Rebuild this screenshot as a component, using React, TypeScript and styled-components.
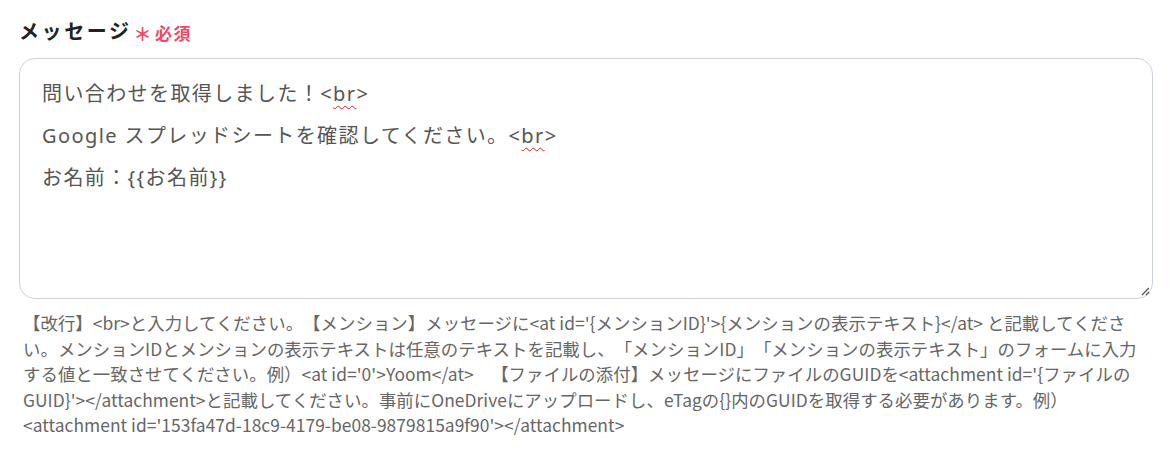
import React from "react";
import styled, { createGlobalStyle } from "styled-components";

const GlobalStyle = createGlobalStyle`
  html, body {
    margin: 0;
    padding: 0;
    background: #ffffff;
  }
  body {
    font-family: "Noto Sans", "Noto Sans CJK JP", sans-serif;
    text-spacing-trim: space-all;
  }
`;

const Page = styled.div`
  width: 1174px;
  height: 460px;
  box-sizing: border-box;
  padding: 14px 21px 0 19px;
  background: #fff;
`;

const LabelRow = styled.div`
  display: flex;
  align-items: center;
  gap: 2px;
  height: 32px;
  margin-bottom: 12px;
`;

const Label = styled.span`
  font-size: 20px;
  font-weight: 700;
  color: #222;
  letter-spacing: 2.6px;
`;

const Required = styled.span`
  display: flex;
  align-items: center;
  gap: 2px;
  color: #f04a65;
  font-size: 17px;
  font-weight: 700;
  letter-spacing: 1.5px;
  margin-top: 4px;
`;

const Star = styled.span`
  font-size: 18px;
  line-height: 1;
  margin-top: 3px;
`;

const Field = styled.div`
  position: relative;
  height: 241px;
  box-sizing: border-box;
  border: 1px solid #cdd3de;
  border-radius: 16px;
  padding: 14px 22px;
  font-size: 20px;
  letter-spacing: 1.4px;
  line-height: 42px;
  color: #555;
`;

const Line = styled.div`
  white-space: pre;
`;

const Typo = styled.span`
  text-decoration: underline wavy #e0201c;
  text-decoration-thickness: 1px;
  text-underline-offset: 4px;
`;

const Grip = styled.svg`
  position: absolute;
  right: 2px;
  bottom: 2px;
`;

const Help = styled.p`
  margin: 11px 0 0 4px;
  font-family: "Noto Sans CJK JP", sans-serif;
  font-size: 17.4px;
  letter-spacing: 0.05px;
  line-height: 25.6px;
  color: #666;
`;

export default function App() {
  return (
    <Page>
      <GlobalStyle />
      <LabelRow>
        <Label>メッセージ</Label>
        <Required>
          <Star>＊</Star>
          必須
        </Required>
      </LabelRow>
      <Field role="textbox" aria-multiline="true">
        <Line>
          問い合わせを取得しました！&lt;<Typo>br</Typo>&gt;
        </Line>
        <Line>
          Google スプレッドシートを確認してください。&lt;<Typo>br</Typo>&gt;
        </Line>
        <Line>お名前：{"{{お名前}}"}</Line>
        <Grip width="10" height="10" viewBox="0 0 10 10">
          <path d="M9 2 L2 9 M9 6 L6 9" stroke="#555" strokeWidth="1.3" />
        </Grip>
      </Field>
      <Help>
        【改行】&lt;br&gt;と入力してください。【メンション】メッセージに&lt;at
        id='{"{メンションID}"}'&gt;{"{メンションの表示テキスト}"}&lt;/at&gt;
        と記載してください。メンションIDとメンションの表示テキストは任意のテキストを記載し、「メンションID」「メンションの表示テキスト」のフォームに入力する値と一致させてください。例）&lt;at
        id='0'&gt;Yoom&lt;/at&gt;　【ファイルの添付】メッセージにファイルのGUIDを&lt;attachment
        id='{"{ファイルのGUID}"}'&gt;&lt;/attachment&gt;と記載してください。事前にOneDriveにアップロードし、eTagの{"{}"}内のGUIDを取得する必要があります。例）&lt;attachment
        id='153fa47d-18c9-4179-be08-9879815a9f90'&gt;&lt;/attachment&gt;
      </Help>
    </Page>
  );
}
